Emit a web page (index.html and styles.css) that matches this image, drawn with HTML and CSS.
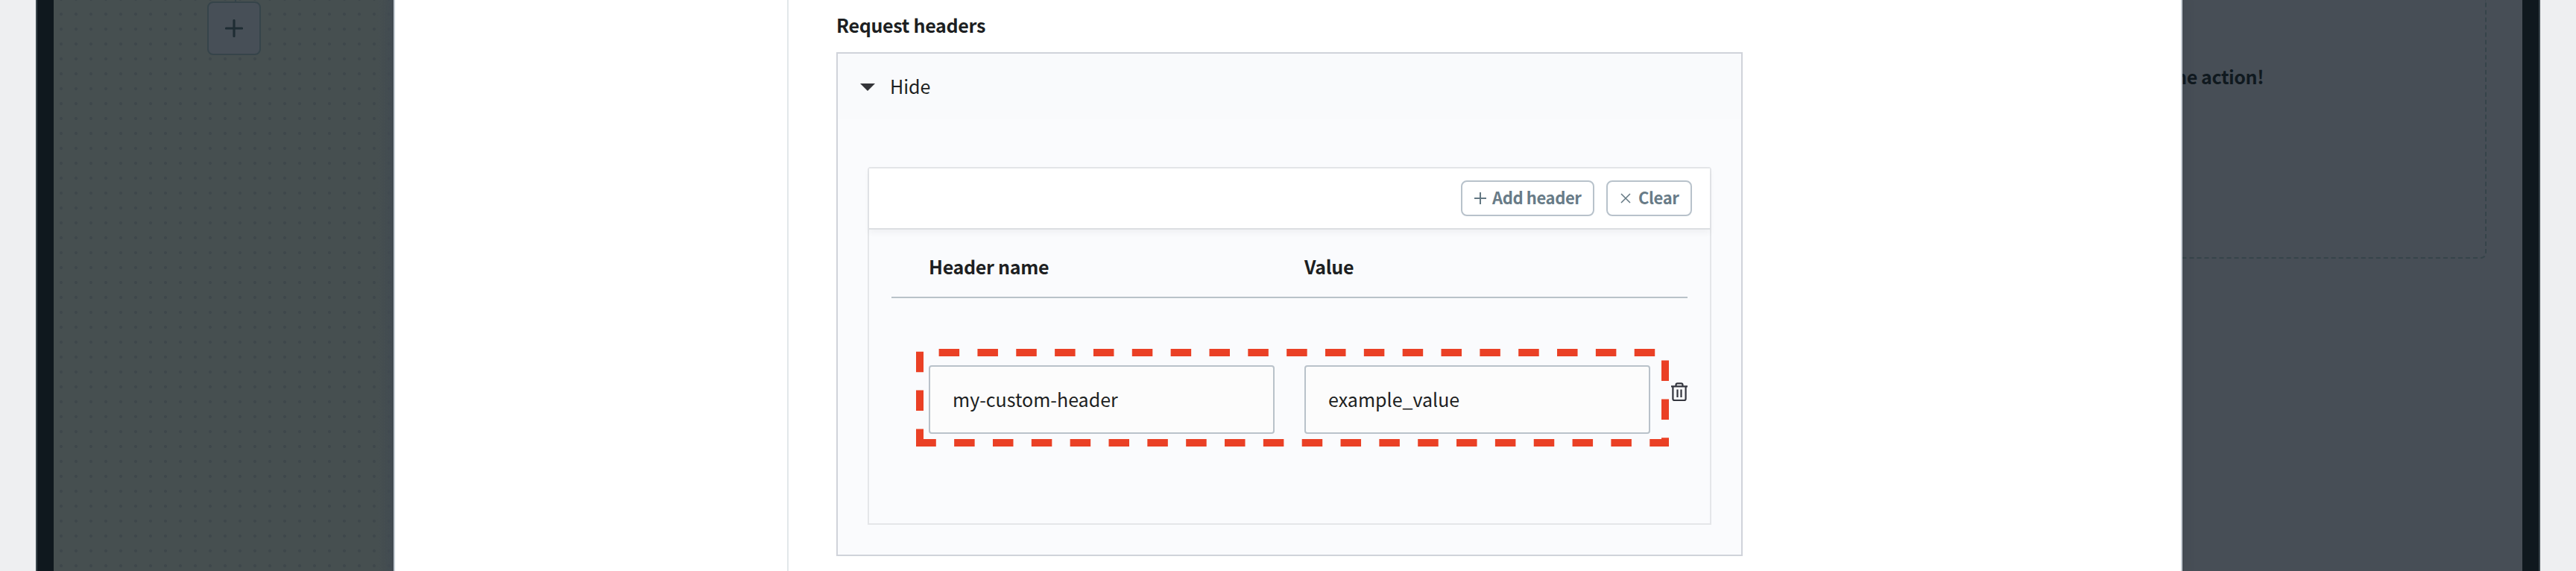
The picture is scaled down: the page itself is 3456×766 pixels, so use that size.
FILE: index.html
```
<!DOCTYPE html>
<html lang="en">
<head>
<meta charset="utf-8">
<title>Request headers</title>
<link rel="stylesheet" href="styles.css">
</head>
<body>
<div class="page">
  <div class="window">
    <div class="canvas">
      <div class="stem"></div>
      <div class="add-node">
        <svg width="24" height="24" viewBox="0 0 24 24"><path d="M12 1.5v21M1.5 12h21" stroke="#1f2d34" stroke-width="3.2" stroke-linecap="round"/></svg>
      </div>
    </div>
    <div class="modal">
      <aside class="modal-nav"></aside>
      <main class="modal-main">
        <h2 class="field-label">Request headers</h2>
        <section class="panel">
          <div class="panel-toggle">
            <svg class="caret" width="20" height="10" viewBox="0 0 20 10"><path d="M0 0h20L10 10z" fill="#343539"/></svg>
            <span class="toggle-text">Hide</span>
          </div>
          <div class="panel-body">
            <div class="table">
              <div class="toolbar">
                <button class="btn btn-add"><svg width="16" height="16" viewBox="0 0 16 16"><path d="M8 0v16M0 8h16" stroke="#647883" stroke-width="2"/></svg><span>Add header</span></button>
                <button class="btn btn-clear"><svg width="14" height="14" viewBox="0 0 14 14"><path d="M1 1l12 12M13 1L1 13" stroke="#647883" stroke-width="1.5"/></svg><span>Clear</span></button>
              </div>
              <div class="table-head"><span>Header name</span><span>Value</span></div>
              <div class="table-row">
                <div class="input">my-custom-header</div>
                <div class="input">example_value</div>
                <svg class="trash" width="22" height="26" viewBox="0 0 22 26" fill="none" stroke="#34363f" stroke-width="2.2"><path d="M0 5.3h22M6.5 5V3.5Q6.500 1.300 8.500 1.300h5Q15.500 1.300 15.500 3.500V5M2.400 5v17q0 2 2 2h13.200q2 0 2-2V5M8.500 9.500v10.500M13.500 9.500v10.500"/></svg>
                <svg class="highlight" width="1010" height="132" viewBox="1229 468 1010 132" fill="none" stroke="#ea4025" stroke-width="10" stroke-dasharray="27.5 24.34"><path d="M1259.600 473H2234V594H1229"/><path d="M1234 471.700V599"/></svg>
              </div>
            </div>
          </div>
        </section>
      </main>
    </div>
    <div class="side">
      <div class="dropzone"><span class="drop-text">See the action!</span></div>
    </div>
  </div>
</div>
</body>
</html>
```
FILE: styles.css
```
* { box-sizing: border-box; }
body { margin: 0; font-family: "Noto Sans CJK SC", "Noto Sans", sans-serif; color: #1d1f22; }
.page { width: 3456px; height: 766px; padding: 0 48px; background: #eeeff1; overflow: hidden; }
.window { display: flex; height: 766px; border: solid #3a454c; border-width: 0 2px; padding: 0 22px; background: #0f181e; }
.canvas {
  position: relative; width: 456px; height: 766px; flex: none;
  background:
    linear-gradient(90deg, transparent 434px, rgba(68, 77, 83, .7) 450px, #444c54 456px),
    radial-gradient(circle at 50% 50%, #3e474b 1.6px, transparent 2.4px) 0 9px / 20px 20px,
    #464f50;
}
.stem { position: absolute; left: 243px; top: 0; width: 2px; height: 2px; background: #35434a; }
.add-node { position: absolute; left: 206px; top: 2px; width: 72px; height: 72px; border: 2px solid #36444a; border-radius: 8px; background: #474f57; display: flex; align-items: center; justify-content: center; }
.add-node svg { display: block; }
.modal { position: relative; z-index: 1; display: flex; width: 2400px; flex: none; height: 766px; background: #fff; border: solid #c8cfd6; border-width: 0 2px; box-shadow: 0 0 16px rgba(40, 55, 65, .15); }
.modal-nav { width: 528px; border-right: 2px solid #e2e7ea; }
.modal-main { width: 1280px; padding-left: 64px; }
.field-label { margin: 0; height: 70px; padding-top: 13px; font-size: 25px; line-height: 40px; font-weight: 700; letter-spacing: -.3px; }
.panel { width: 1216px; height: 676px; border: 2px solid #d0d3da; background: #fafbfd; }
.panel-toggle { display: flex; align-items: center; gap: 20px; height: 88px; padding: 0 30px 2px; background: #f9fafc; }
.caret { margin-top: 4px; }
.toggle-text { font-size: 25px; line-height: 40px; }
.panel-body { padding: 64px 40px 0; }
.table { height: 480px; border: 2px solid #e4e6e9; border-radius: 4px 4px 0 0; }
.toolbar { display: flex; justify-content: flex-end; align-items: center; gap: 16px; height: 82px; padding-right: 24px; background: #fff; border-bottom: 2px solid #dcdfe2; box-shadow: 0 4px 8px rgba(30, 40, 50, .05); }
.btn { display: flex; align-items: center; height: 48px; padding: 0 0 0 16px; border: 2px solid #b8c2cb; border-radius: 8px; background: #fff; color: #687b87; font: 700 22px/32px "Noto Sans CJK SC", "Noto Sans", sans-serif; letter-spacing: -.4px; white-space: nowrap; }
.btn span { padding-bottom: 5px; }
.btn-add { width: 179px; gap: 8px; }
.btn-clear { width: 115px; gap: 10px; padding-left: 17px; }
.table-head { display: grid; grid-template-columns: 504px 504px; height: 92px; margin: 0 30px; padding: 29px 0 0 50px; border-bottom: 2px solid #b9c2c9; font-size: 25px; line-height: 40px; font-weight: 700; letter-spacing: -.3px; }
.table-row { position: relative; display: flex; gap: 40px; padding: 90px 0 0 80px; }
.input { width: 464px; height: 92px; padding: 0 0 0 30px; border: 2px solid #b9c2ca; border-radius: 4px; background: #fcfcfc; font-size: 25px; line-height: 86px; }
.trash { margin: 23px 0 0 -12px; }
.highlight { position: absolute; left: 63px; top: 68px; }
.side { display: flex; flex: 1; height: 766px; background: #474e56; }
.dropzone { position: relative; width: 408px; height: 347px; border: 2px dashed #36444a; border-width: 0 2px 2px 0; border-radius: 0 0 8px 0; }
.drop-text { position: absolute; right: 297px; top: 82px; white-space: nowrap; font-size: 25px; line-height: 40px; font-weight: 700; letter-spacing: -.4px; color: #10191f; }
```
